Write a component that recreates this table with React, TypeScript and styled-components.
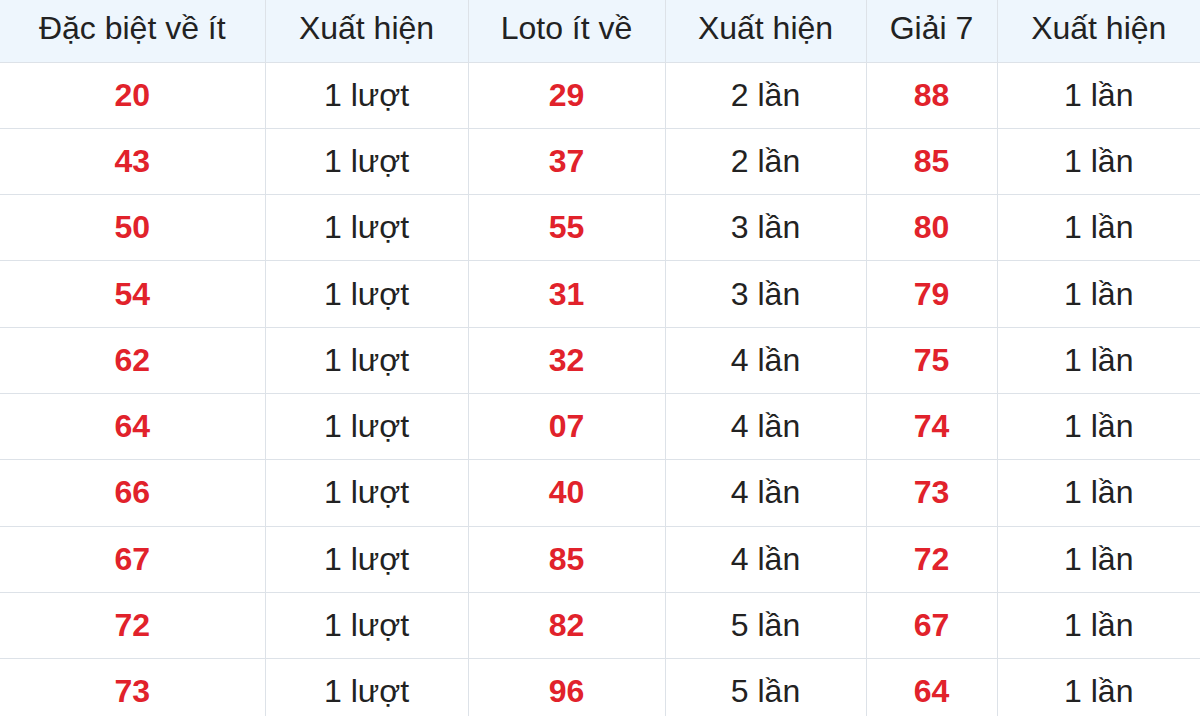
import React from "react";
import styled, { createGlobalStyle } from "styled-components";

const GlobalStyle = createGlobalStyle`
  html, body {
    margin: 0;
    padding: 0;
    background: #fff;
  }
  body {
    font-family: "Liberation Sans", Arial, sans-serif;
  }
`;

const Wrap = styled.div`
  width: 1200px;
  height: 716px;
  overflow: hidden;
  background: #fff;
`;

const Table = styled.table`
  width: 1200px;
  border-collapse: collapse;
  table-layout: fixed;
  font-family: "Liberation Sans", Arial, sans-serif;
  font-size: 32px;
  color: #222;
`;

const HeadCell = styled.th<{ w?: number }>`
  width: ${({ w }) => (w ? `${w}px` : "auto")};
  height: 62px;
  padding: 0 0 4px;
  box-sizing: border-box;
  background: #eef6fd;
  font-weight: 400;
  text-align: center;
  border-right: 1px solid #dde2e8;
  border-bottom: 1px solid #dde2e8;
  &:last-child {
    border-right: none;
  }
`;

const Row = styled.tr`
  height: 66.3px;
`;

const Cell = styled.td<{ $num?: boolean }>`
  padding: 0;
  text-align: center;
  border-right: 1px solid #dde2e8;
  border-bottom: 1px solid #dde2e8;
  color: ${({ $num }) => ($num ? "#e1222b" : "#222")};
  font-weight: ${({ $num }) => ($num ? 700 : 400)};
  &:last-child {
    border-right: none;
  }
`;

const headers = [
  { label: "Đặc biệt về ít", w: 265 },
  { label: "Xuất hiện", w: 203 },
  { label: "Loto ít về", w: 197 },
  { label: "Xuất hiện", w: 201 },
  { label: "Giải 7", w: 131 },
  { label: "Xuất hiện" },
];

const rows: [string, string, string, string, string, string][] = [
  ["20", "1 lượt", "29", "2 lần", "88", "1 lần"],
  ["43", "1 lượt", "37", "2 lần", "85", "1 lần"],
  ["50", "1 lượt", "55", "3 lần", "80", "1 lần"],
  ["54", "1 lượt", "31", "3 lần", "79", "1 lần"],
  ["62", "1 lượt", "32", "4 lần", "75", "1 lần"],
  ["64", "1 lượt", "07", "4 lần", "74", "1 lần"],
  ["66", "1 lượt", "40", "4 lần", "73", "1 lần"],
  ["67", "1 lượt", "85", "4 lần", "72", "1 lần"],
  ["72", "1 lượt", "82", "5 lần", "67", "1 lần"],
  ["73", "1 lượt", "96", "5 lần", "64", "1 lần"],
];

export default function App() {
  return (
    <Wrap>
      <GlobalStyle />
      <Table>
        <thead>
          <tr>
            {headers.map((h, i) => (
              <HeadCell key={i} w={h.w}>
                {h.label}
              </HeadCell>
            ))}
          </tr>
        </thead>
        <tbody>
          {rows.map((r, i) => (
            <Row key={i}>
              {r.map((v, j) => (
                <Cell key={j} $num={j % 2 === 0}>
                  {v}
                </Cell>
              ))}
            </Row>
          ))}
        </tbody>
      </Table>
    </Wrap>
  );
}
